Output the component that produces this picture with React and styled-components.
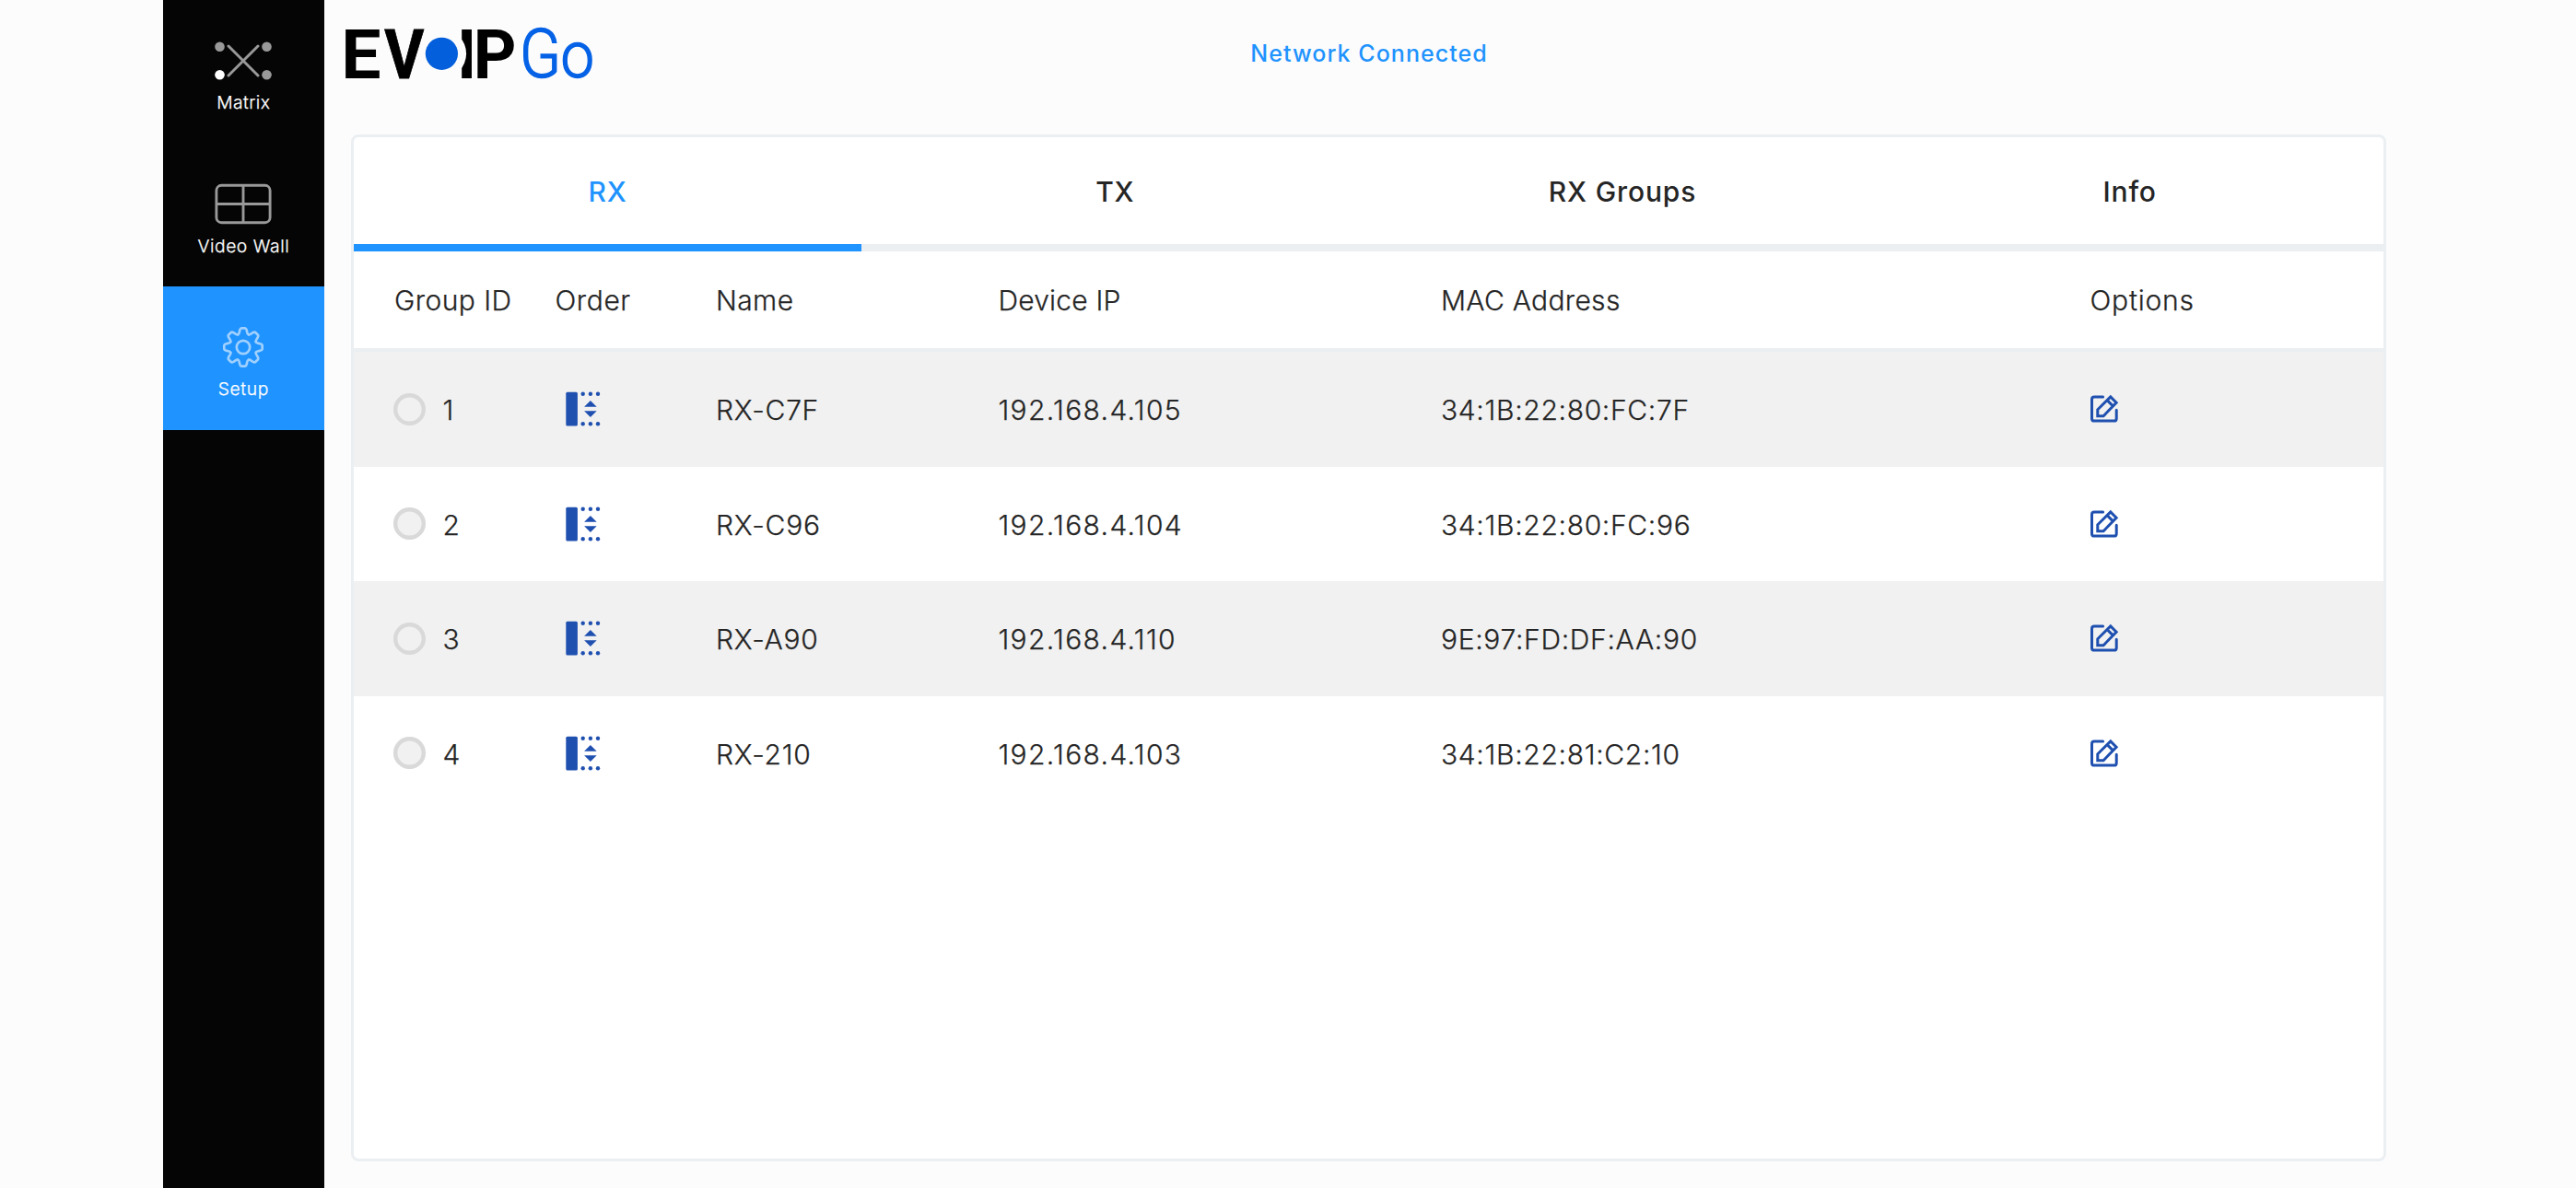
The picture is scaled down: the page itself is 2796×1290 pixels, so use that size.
import React from 'react';
import styled, { createGlobalStyle } from 'styled-components';

const color = {
  page: '#fcfcfc',
  ink: '#252525',
  accent: '#1f93ff',
  line: '#ebeff2',
  stripe: '#f1f1f1',
  icon: '#1f50b0',
};

const GlobalStyle = createGlobalStyle`
  * { box-sizing: border-box; }
  body {
    margin: 0;
    background: ${color.page};
    color: ${color.ink};
    font-family: Inter, "Liberation Sans", sans-serif;
  }
`;

const Screen = styled.div`
  display: flex;
  height: 1290px;
  padding: 0 206px 0 177px;
  overflow: hidden;
`;

const Sidebar = styled.nav`
  flex: 0 0 174.7px;
  background: #050505;
`;

const NavItem = styled.a`
  display: flex;
  flex-direction: column;
  align-items: center;
  height: 155.5px;
  padding-top: 34px;
  background: ${(p) => (p.$active ? color.accent : 'transparent')};
  color: #fff;
`;

const NavIcon = styled.svg`
  display: block;
  width: 64px;
  height: 64px;
`;

const NavLabel = styled.span`
  margin-top: 1.4px;
  font-size: 19.3px;
  font-weight: 300;
  line-height: 24px;
  -webkit-text-stroke: 0.25px currentColor;
  letter-spacing: ${(p) => p.$spacing}px;
`;

const Main = styled.main`
  flex: 1;
  display: flex;
  flex-direction: column;
  padding: 0 0 29px 18.3px;
`;

const Header = styled.header`
  display: grid;
  grid-template-columns: 1fr auto 1fr;
  align-items: center;
  height: 116px;
  margin-bottom: 29.7px;
`;

const Logo = styled.svg`
  display: block;
  width: 290px;
  height: 100px;
  font-family: Roboto, "Liberation Sans", sans-serif;
`;

const Status = styled.div`
  margin-left: 12px;
  color: ${color.accent};
  font-size: 25px;
  font-weight: 500;
  letter-spacing: 1.05px;
`;

const Card = styled.section`
  flex: 1;
  margin-left: 11.3px;
  border: 3px solid ${color.line};
  border-radius: 8px;
  background: #fff;
  overflow: hidden;
`;

const Tabs = styled.div`
  display: grid;
  grid-template-columns: repeat(4, 1fr);
`;

const Tab = styled.div`
  display: flex;
  align-items: center;
  justify-content: center;
  height: 124.4px;
  padding-top: 2px;
  border-bottom: 8px solid ${(p) => (p.$active ? color.accent : color.line)};
  color: ${(p) => (p.$active ? color.accent : color.ink)};
  font-size: 30px;
  font-weight: 500;
  letter-spacing: 0.85px;
`;

const Row = styled.div`
  display: grid;
  grid-template-columns: 174.6px 174.6px 306.4px 480.5px 704.5px 1fr;
  align-items: center;
  height: 124.55px;
  padding-left: 43.6px;
  background: ${(p) => (p.$striped ? color.stripe : '#fff')};
  font-size: 30px;
`;

const HeadRow = styled(Row)`
  height: 109px;
  padding-bottom: 1.4px;
  border-bottom: 4px solid ${color.line};
`;

const Cell = styled.div`
  display: flex;
  align-items: center;
  padding-top: 2px;
  font-weight: 300;
  white-space: nowrap;
  -webkit-text-stroke: 0.25px currentColor;
  letter-spacing: ${(p) => p.$spacing || 0.4}px;
`;

const IconCell = styled.div`
  display: flex;
  align-items: center;
  padding-left: ${(p) => p.$inset || 0}px;
`;

const Radio = styled.span`
  width: 35px;
  height: 35px;
  margin: -2px 18px 0 -0.5px;
  border-radius: 50%;
  background: #f1f1f1;
  box-shadow: inset 0 0 0 4.4px #d9d9d9;
`;

const RowIcon = styled.svg`
  display: block;
  width: 40px;
  height: 40px;
`;

function MatrixIcon() {
  return (
    <NavIcon viewBox="-32 -32 64 64" fill="#999">
      <path d="M-16-16L16 16M16-16L-16 16" stroke="#999" strokeWidth="3" strokeLinecap="round" />
      <circle cx="-25.5" cy="-15.2" r="5.3" />
      <circle cx="25.5" cy="-15.2" r="5.3" />
      <circle cx="25.5" cy="15.2" r="5.3" />
      <circle cx="-25.5" cy="15.2" r="5.3" fill="#fff" />
    </NavIcon>
  );
}

function WallIcon() {
  return (
    <NavIcon viewBox="-32 -31.5 64 64" fill="none" stroke="#999" strokeWidth="2.9">
      <rect x="-29.1" y="-20.2" width="58.2" height="40.4" rx="5.5" />
      <path d="M-29 0H29M0-20V20" />
    </NavIcon>
  );
}

const tooth =
  'M-5.7-13.8C-4.2-14.4-4.3-16-3.8-18.2C-3.3-20.3-2.9-20.7-1.6-20.7H1.6C2.9-20.7 3.3-20.3 3.8-18.2C4.3-16 4.2-14.4 5.7-13.8';

function GearIcon() {
  return (
    <NavIcon viewBox="-32 -32 64 64" fill="none" stroke="#a0d0ff" strokeWidth="2.7" strokeLinecap="round">
      {[0, 45, 90, 135, 180, 225, 270, 315].map((a) => (
        <path key={a} d={tooth} transform={`rotate(${a})`} />
      ))}
      <circle r="7.2" />
    </NavIcon>
  );
}

function OrderIcon() {
  return (
    <RowIcon viewBox="0 0 40 40" fill={color.icon}>
      <rect x="1.3" y="1.7" width="12.6" height="36.8" rx="1.5" />
      {[19.7, 27.9, 36].map((x) => (
        <React.Fragment key={x}>
          <circle cx={x} cy="3.8" r="2.2" />
          <circle cx={x} cy="36.3" r="2.2" />
        </React.Fragment>
      ))}
      <path d="M27.9 11L34.7 17.7H21.1ZM27.9 29L34.7 22.3H21.1Z" />
    </RowIcon>
  );
}

function EditIcon() {
  return (
    <RowIcon viewBox="-0.4 0 40 40" fill="none" stroke={color.icon} strokeWidth="3" strokeLinecap="round">
      <path d="M14.2 7H4.8Q2.1 7 2.1 9.7V30.4Q2.1 33.1 4.8 33.1H26.1Q28.8 33.1 28.8 30.4V21.2" strokeLinejoin="round" />
      <path d="M8.4 27.7V20.8L22.4 6.9L28.7 13.2L14.7 27.7ZM18.7 10.6L25 16.9" />
    </RowIcon>
  );
}

function Brand() {
  return (
    <Logo viewBox="370 8 290 100" aria-label="EVoIP Go">
      <g fontSize="74" fontWeight="700" fill="#000">
        <text transform="translate(370.2 84.5) scale(1.04 1)">E</text>
        <text transform="translate(495.8 84.5)">I</text>
        <text transform="translate(513.7 84.5) scale(0.98 1)">P</text>
        <circle cx="479.4" cy="58.3" r="26.7" fill={color.page} />
        <text transform="translate(417.2 84.5) scale(0.89 1)" stroke="#000" strokeWidth="0.8">V</text>
      </g>
      <circle cx="479.4" cy="58.3" r="17.6" fill="#045fdc" />
      <g fontSize="74" fontWeight="300" fill="#0562e6" stroke="#0562e6" strokeWidth="1.5">
        <text transform="translate(563.9 84.2) scale(0.89 0.99)">G</text>
        <text transform="translate(608.6 84.2) scale(0.88 0.96)">o</text>
      </g>
    </Logo>
  );
}

const devices = [
  { id: 1, name: 'RX-C7F', ip: '192.168.4.105', mac: '34:1B:22:80:FC:7F' },
  { id: 2, name: 'RX-C96', ip: '192.168.4.104', mac: '34:1B:22:80:FC:96' },
  { id: 3, name: 'RX-A90', ip: '192.168.4.110', mac: '9E:97:FD:DF:AA:90' },
  { id: 4, name: 'RX-210', ip: '192.168.4.103', mac: '34:1B:22:81:C2:10' },
];

export default function App() {
  return (
    <>
      <GlobalStyle />
      <Screen>
        <Sidebar>
          <NavItem>
            <MatrixIcon />
            <NavLabel $spacing={0.4}>Matrix</NavLabel>
          </NavItem>
          <NavItem>
            <WallIcon />
            <NavLabel $spacing={0.55}>Video Wall</NavLabel>
          </NavItem>
          <NavItem $active>
            <GearIcon />
            <NavLabel $spacing={0.6}>Setup</NavLabel>
          </NavItem>
        </Sidebar>
        <Main>
          <Header>
            <Brand />
            <Status>Network Connected</Status>
          </Header>
          <Card>
            <Tabs>
              <Tab $active>RX</Tab>
              <Tab>TX</Tab>
              <Tab>RX Groups</Tab>
              <Tab>Info</Tab>
            </Tabs>
            <HeadRow>
              <Cell $spacing={0.47}>Group ID</Cell>
              <Cell $spacing={0.6}>Order</Cell>
              <Cell>Name</Cell>
              <Cell $spacing={0.2}>Device IP</Cell>
              <Cell $spacing={0.3}>MAC Address</Cell>
              <Cell $spacing={0.8}>Options</Cell>
            </HeadRow>
            {devices.map((d, i) => (
              <Row key={d.id} $striped={i % 2 === 0}>
                <Cell>
                  <Radio />
                  {d.id}
                </Cell>
                <IconCell $inset={10.9}>
                  <OrderIcon />
                </IconCell>
                <Cell $spacing={0.7}>{d.name}</Cell>
                <Cell $spacing={1.35}>{d.ip}</Cell>
                <Cell $spacing={0.68}>{d.mac}</Cell>
                <IconCell>
                  <EditIcon />
                </IconCell>
              </Row>
            ))}
          </Card>
        </Main>
      </Screen>
    </>
  );
}
